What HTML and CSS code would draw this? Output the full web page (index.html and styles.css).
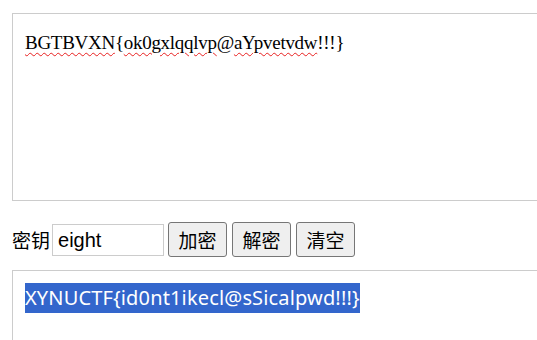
FILE: index.html
```html
<!DOCTYPE html>
<html lang="zh-CN">
<head>
    <meta charset="UTF-8">
    <title>加密解密</title>
    <link rel="stylesheet" href="styles.css">
</head>
<body>
    <div class="text-box input-box">
        <span class="typo">BGTBVXN</span>{<span class="typo">ok0gxlqqlvp</span>@<span class="typo">aYpvetvdw</span>!!!}
    </div>

    <div class="key-row">
        <label class="key-label">密钥</label>
        <div class="key-input">eight</div>
        <button class="btn">加密</button>
        <button class="btn">解密</button>
        <button class="btn">清空</button>
    </div>

    <div class="text-box output-box">
        <span class="selected">XYNUCTF{id0nt1ikecl@sSicalpwd!!!}</span>
    </div>
</body>
</html>
```

FILE: styles.css
```css
html {
    overflow: hidden;
}

body {
    margin: 0;
    padding: 13px 0 0 12px;
    background: #fff;
    font-family: 'Noto Sans CJK SC', sans-serif;
    color: #000;
}

.text-box {
    width: 560px;
    border: 1px solid #ccc;
    box-sizing: border-box;
    padding: 12px;
}

.input-box {
    height: 188px;
    padding-top: 18px;
    font-family: 'Liberation Serif', serif;
    font-size: 19px;
    line-height: 22px;
    letter-spacing: -0.28px;
}

.typo {
    text-decoration: underline wavy #e82020;
    text-decoration-thickness: 1.3px;
    text-underline-offset: 3px;
}

.key-row {
    display: flex;
    align-items: center;
    margin-top: 21px;
    height: 35px;
}

.key-label {
    font-size: 19px;
    margin-right: 2px;
}

.key-input {
    width: 112px;
    height: 32px;
    border: 1px solid #ccc;
    box-sizing: border-box;
    padding-left: 5px;
    font-family: 'Liberation Sans', sans-serif;
    font-size: 20px;
    line-height: 30px;
    margin-right: 4px;
}

.btn {
    width: 59px;
    height: 35px;
    margin-right: 5px;
    padding: 0;
    background: #efefef;
    border: 1px solid #767676;
    border-radius: 3px;
    font-family: 'Noto Sans CJK SC', sans-serif;
    font-size: 19px;
    color: #000;
}

.output-box {
    margin-top: 13px;
    height: 100px;
    font-family: 'Noto Sans', sans-serif;
    font-size: 20px;
}

.selected {
    display: inline-block;
    background: #3366cc;
    color: #fff;
    line-height: 30px;
    letter-spacing: 0.15px;
}
```
